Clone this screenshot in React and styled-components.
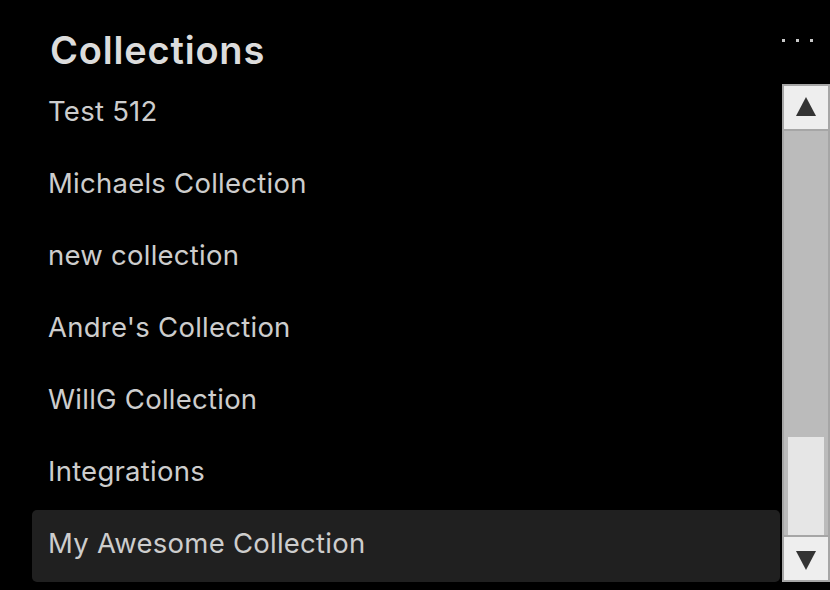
import React from "react";
import styled, { createGlobalStyle } from "styled-components";

const Global = createGlobalStyle`
  html, body { margin: 0; padding: 0; background: #000; }
  body { font-family: Inter, "Noto Sans", sans-serif; overflow: hidden; }
`;

const Page = styled.div`
  width: 830px;
  height: 590px;
  background: #000;
  display: flex;
  flex-direction: column;
  overflow: hidden;
`;

const Header = styled.div`
  height: 78px;
  display: flex;
  align-items: flex-start;
  justify-content: space-between;
  flex-shrink: 0;
`;

const Title = styled.h1`
  margin: 26px 0 0 50px;
  font-size: 38px;
  line-height: 48px;
  font-weight: 600;
  color: #dcdcdc;
  letter-spacing: 0.8px;
`;

const MoreButton = styled.div`
  display: flex;
  gap: 11px;
  margin: 39px 17px 0 0;
`;

const Dot = styled.span`
  width: 3px;
  height: 3px;
  background: #c8c8c8;
`;

const Body = styled.div`
  display: flex;
  height: 504px;
  gap: 2px;
`;

const List = styled.div`
  width: 748px;
  margin-left: 32px;
  display: flex;
  flex-direction: column;
`;

const Item = styled.div`
  height: 72px;
  flex-shrink: 0;
  display: flex;
  align-items: center;
  padding-left: 16px;
  padding-bottom: 6px;
  box-sizing: border-box;
  font-size: 27.5px;
  letter-spacing: 0.25px;
  color: #cdcdcd;
  border-radius: 5px;
  background: ${(p) => (p.$selected ? "#202020" : "transparent")};
`;

const ScrollBar = styled.div`
  width: 48px;
  margin-top: 6px;
  height: 498px;
  box-sizing: border-box;
  background: #a6a6a6;
  padding: 2px;
  display: flex;
  flex-direction: column;
  gap: 2px;
`;

const ArrowButton = styled.div`
  height: 43px;
  flex-shrink: 0;
  background: #eeeeee;
  display: flex;
  align-items: center;
  justify-content: center;
`;

const Track = styled.div`
  flex: 1;
  background: #bbbbbb;
  display: flex;
  flex-direction: column;
  justify-content: flex-end;
  align-items: center;
`;

const Thumb = styled.div`
  width: 36px;
  height: 98px;
  background: #e6e6e6;
`;

const Arrow = ({ down }) => (
  <svg width="22" height="22" viewBox="0 0 22 22">
    <polygon
      points={down ? "1,3 21,3 11,22" : "11,0 21,19 1,19"}
      fill="#333"
    />
  </svg>
);

const items = [
  "Test 512",
  "Michaels Collection",
  "new collection",
  "Andre's Collection",
  "WillG Collection",
  "Integrations",
  "My Awesome Collection",
];

export default function App() {
  return (
    <Page>
      <Global />
      <Header>
        <Title>Collections</Title>
        <MoreButton>
          <Dot />
          <Dot />
          <Dot />
        </MoreButton>
      </Header>
      <Body>
        <List>
          {items.map((t, i) => (
            <Item key={t} $selected={i === items.length - 1}>
              {t}
            </Item>
          ))}
        </List>
        <ScrollBar>
          <ArrowButton>
            <Arrow />
          </ArrowButton>
          <Track>
            <Thumb />
          </Track>
          <ArrowButton>
            <Arrow down />
          </ArrowButton>
        </ScrollBar>
      </Body>
    </Page>
  );
}
